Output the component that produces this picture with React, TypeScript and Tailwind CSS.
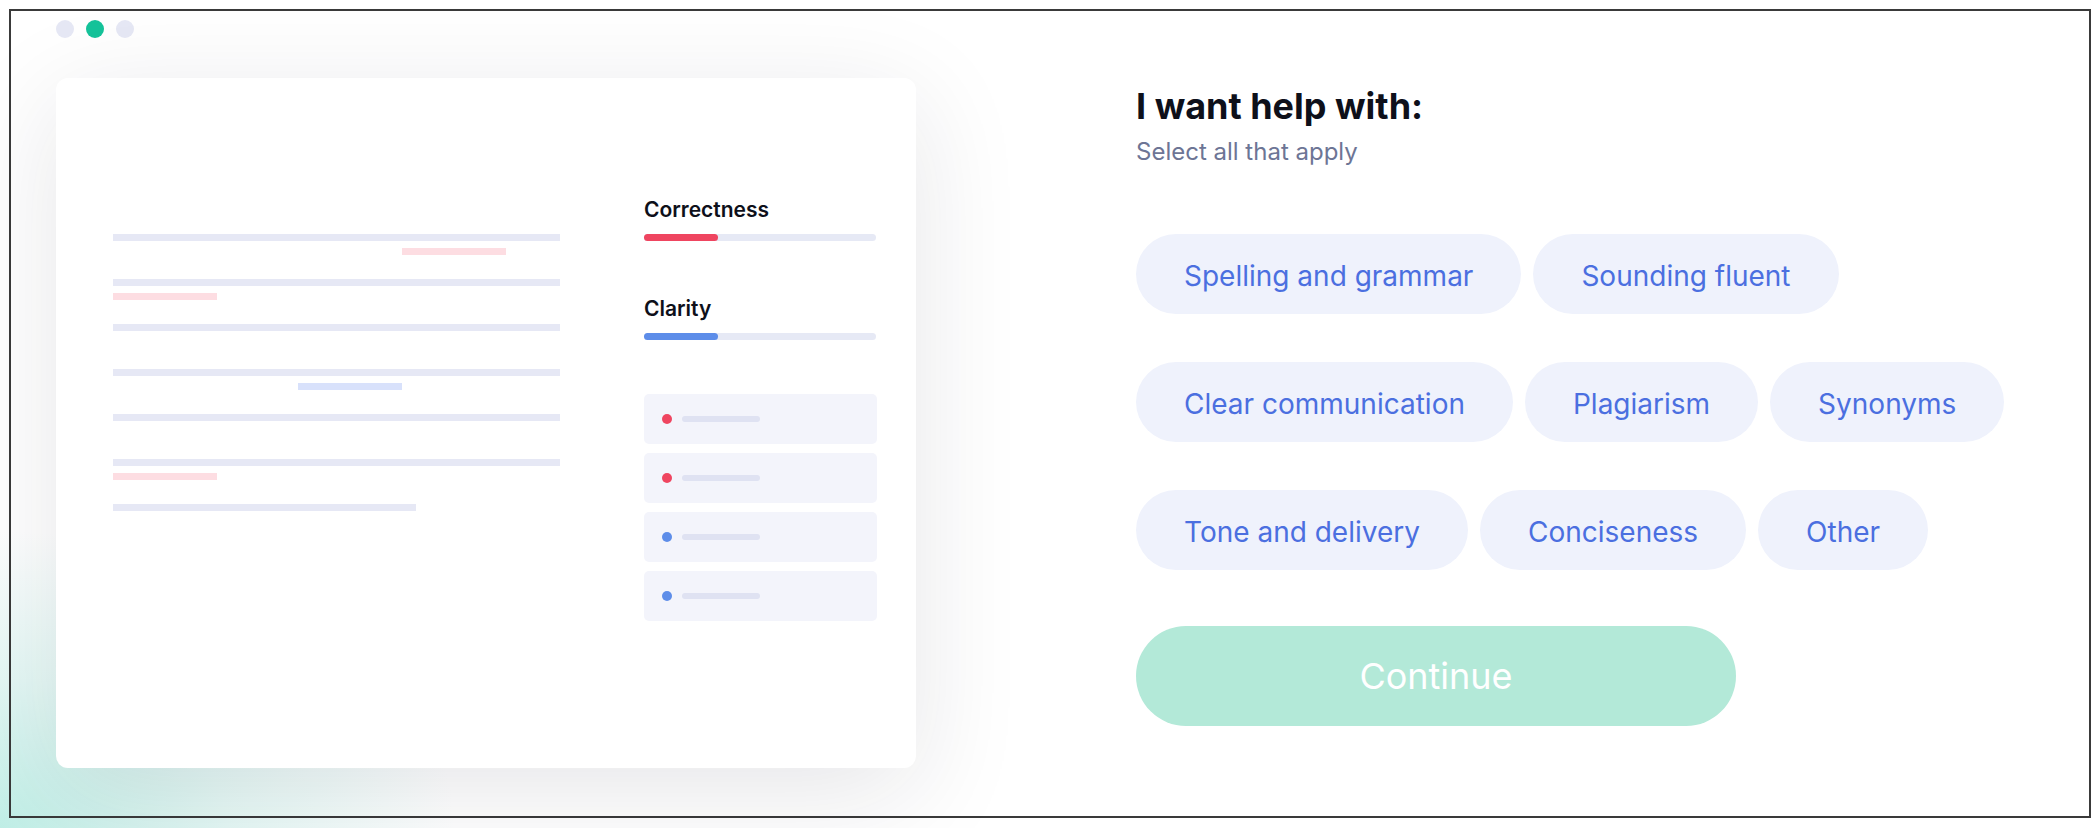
import React from 'react';

const chips = [
  'Spelling and grammar',
  'Sounding fluent',
  'Clear communication',
  'Plagiarism',
  'Synonyms',
  'Tone and delivery',
  'Conciseness',
  'Other',
];

// each text row: a grey line plus an optional highlight under it
const rows = [
  { hl: 'bg-[#fddde2]', offset: 289, width: 447 },
  { hl: 'bg-[#fddde2]', offset: 0, width: 447 },
  { hl: '', offset: 0, width: 447 },
  { hl: 'bg-[#d8e1fb]', offset: 185, width: 447 },
  { hl: '', offset: 0, width: 447 },
  { hl: 'bg-[#fddde2]', offset: 0, width: 447 },
  { hl: '', offset: 0, width: 303 },
];

const issues = ['bg-[#ef4560]', 'bg-[#ef4560]', 'bg-[#5d8de9]', 'bg-[#5d8de9]'];

const ScoreBar: React.FC<{ label: string; color: string; className?: string }> = ({ label, color, className }) => (
  <div className={className}>
    <p className="text-[21px] leading-[26px] font-semibold text-[#0e101a]">{label}</p>
    <div className="mt-[11px] h-[7px] w-[232px] rounded-full bg-[#e6e9f5]">
      <div className={`h-full w-[74px] rounded-full ${color}`} />
    </div>
  </div>
);

export default function App() {
  return (
    <div
      className="relative w-[2100px] h-[828px] overflow-hidden bg-white pl-[9px] pt-[9px]"
      style={{ fontFamily: 'Inter, "Noto Sans", sans-serif' }}
    >
      {/* teal glow, bottom left */}
      <div className="absolute left-0 bottom-0 w-[460px] h-[300px] bg-[radial-gradient(ellipse_at_0%_100%,rgba(176,234,224,0.8)_0%,rgba(190,238,230,0.4)_35%,rgba(255,255,255,0)_70%)]" />

      <div className="relative flex w-[2082px] h-[809px] border-2 border-[#3a3a3a]">
        {/* Preview */}
        <div className="flex flex-col pl-[45px] pt-[9px]">
          <div className="flex gap-[12px]">
            <span className="w-[18px] h-[18px] rounded-full bg-[#e6e8f5]" />
            <span className="w-[18px] h-[18px] rounded-full bg-[#15c39a]" />
            <span className="w-[18px] h-[18px] rounded-full bg-[#e6e8f5]" />
          </div>

          <div className="mt-[40px] flex items-start w-[860px] h-[690px] rounded-[12px] bg-white pl-[57px] shadow-[0_24px_110px_rgba(30,30,50,0.11)]">
            <div className="mt-[156px] flex flex-col w-[447px]">
              {rows.map((r, i) => (
                <div key={i} className="h-[45px]">
                  <div className="h-[7px] bg-[#e6e8f5]" style={{ width: r.width }} />
                  {r.hl && (
                    <div className={`mt-[7px] h-[7px] w-[104px] ${r.hl}`} style={{ marginLeft: r.offset }} />
                  )}
                </div>
              ))}
            </div>

            <div className="ml-[84px] mt-[119px] flex flex-col w-[233px]">
              <ScoreBar label="Correctness" color="bg-[#ef4560]" />
              <ScoreBar label="Clarity" color="bg-[#5d8de9]" className="mt-[55px]" />
              <div className="mt-[54px] flex flex-col gap-[9px]">
                {issues.map((c, i) => (
                  <div key={i} className="flex items-center h-[50px] rounded-[5px] bg-[#f3f4fb] pl-[18px]">
                    <span className={`w-[10px] h-[10px] rounded-full ${c}`} />
                    <span className="ml-[10px] h-[6px] w-[78px] rounded-full bg-[#dfe2f2]" />
                  </div>
                ))}
              </div>
            </div>
          </div>
        </div>

        {/* Form */}
        <div className="ml-[220px] pt-[73px] flex flex-col w-[940px]">
          <h1 className="text-[36px] leading-[44px] font-bold text-[#0e101a]">I want help with:</h1>
          <p className="mt-[8px] text-[24px] leading-[32px] text-[#6d7595]">Select all that apply</p>

          <div className="mt-[66px] flex flex-wrap gap-x-[12px] gap-y-[48px] w-[940px]">
            {chips.map((c) => (
              <button
                key={c}
                className="h-[80px] px-[48px] pt-[4px] rounded-full bg-[#eff2fc] text-[28px] text-[#4b6fe0]"
              >
                {c}
              </button>
            ))}
          </div>

          <button className="mt-[56px] w-[600px] h-[100px] rounded-full bg-[#b3e9d8] text-[36px] text-white">
            Continue
          </button>
        </div>
      </div>
    </div>
  );
}
